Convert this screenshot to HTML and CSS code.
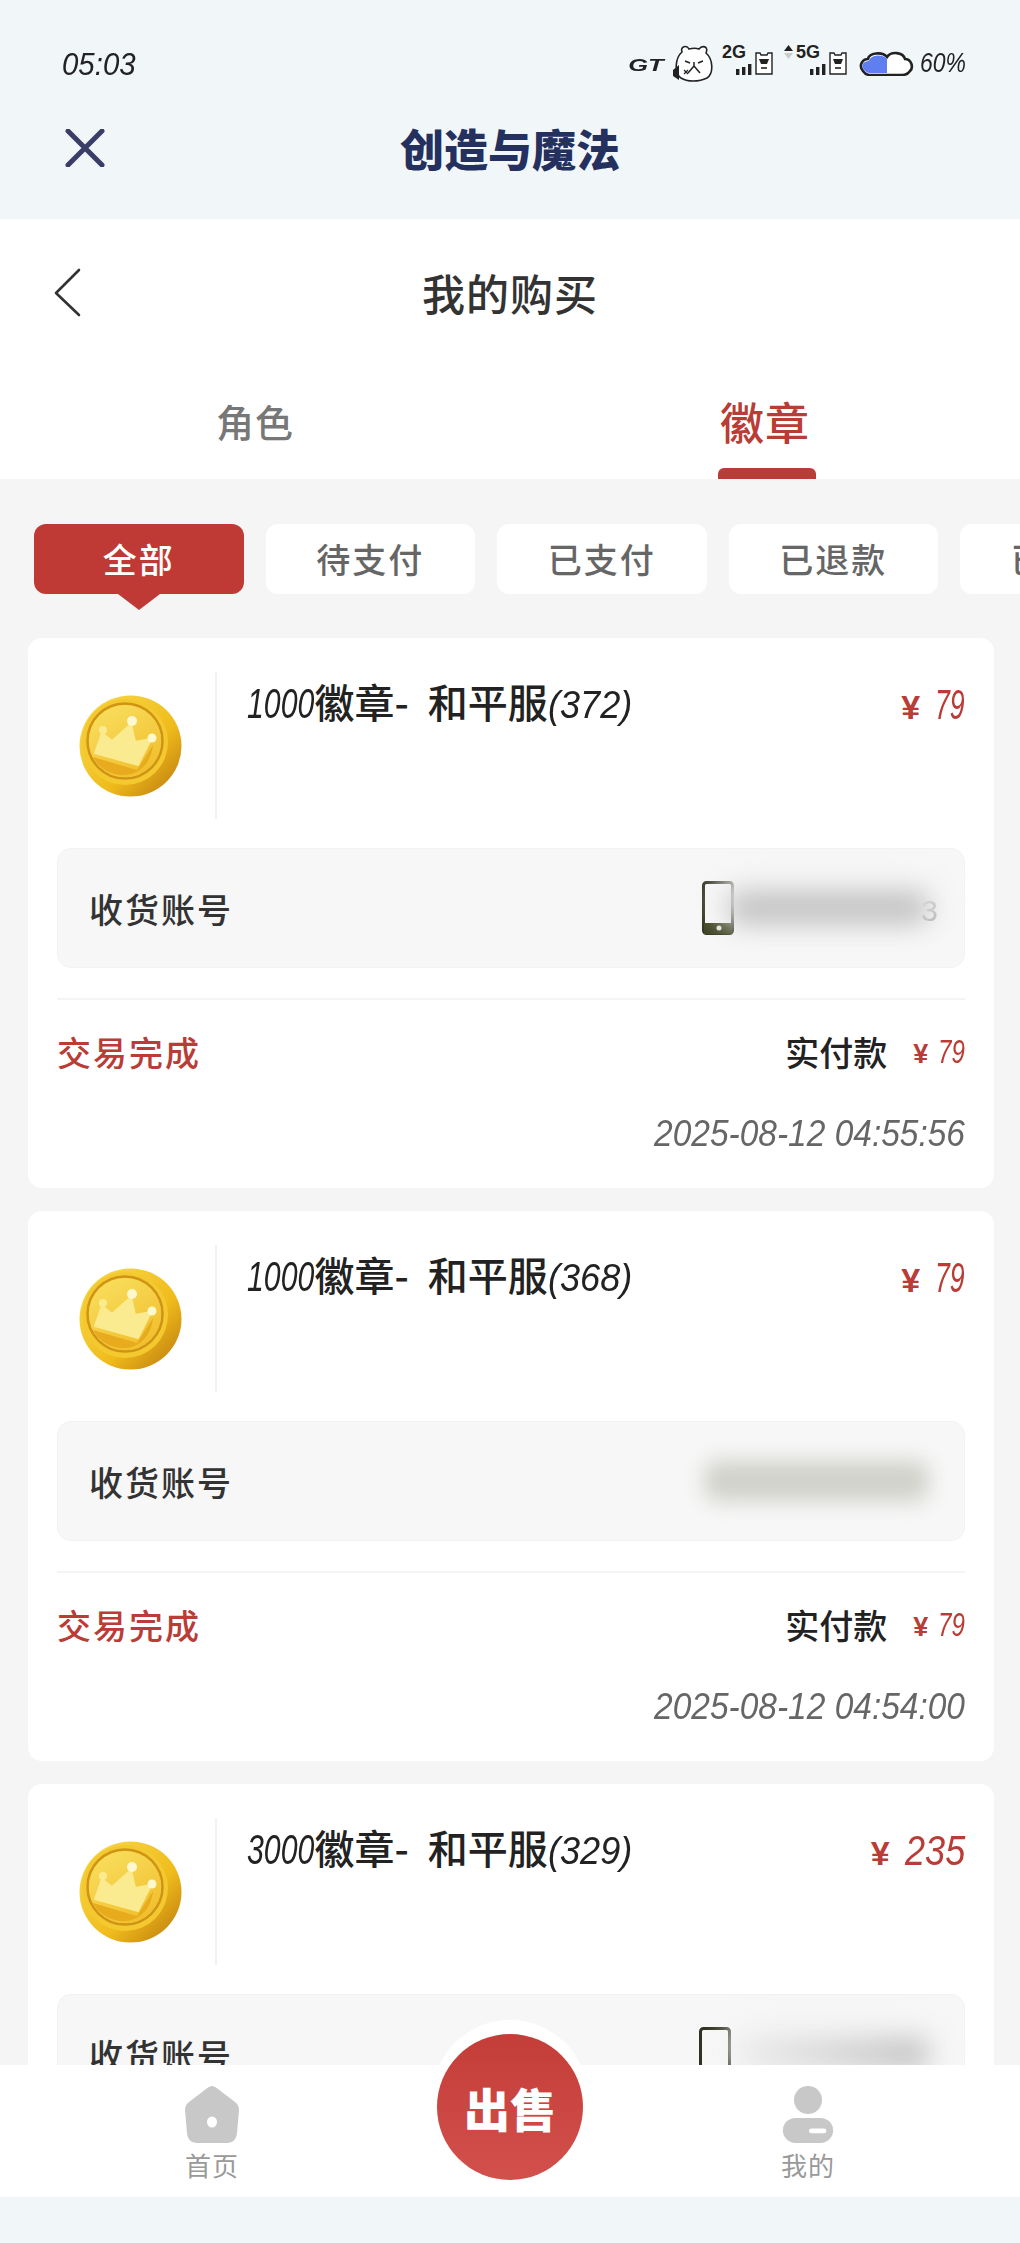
FILE: index.html
```html
<!DOCTYPE html>
<html lang="zh-CN">
<head>
    <meta charset="UTF-8">
    <meta name="viewport" content="width=device-width, initial-scale=1.0">
    <title>我的购买</title>
    <link rel="stylesheet" href="styles.css">
</head>
<body>

    <!-- Shared shapes -->
    <svg class="defs" width="0" height="0" aria-hidden="true">
        <defs>
            <linearGradient id="coinEdge" x1="0" y1="0" x2="1" y2="1">
                <stop offset="0" stop-color="#f8dc4e"/>
                <stop offset="0.6" stop-color="#f0bc1c"/>
                <stop offset="1" stop-color="#b9760c"/>
            </linearGradient>
            <linearGradient id="coinFace" x1="0.2" y1="0" x2="0.8" y2="1">
                <stop offset="0" stop-color="#f9de5e"/>
                <stop offset="1" stop-color="#f0bd2a"/>
            </linearGradient>
            <symbol id="coin" viewBox="0 0 103 102">
                <ellipse cx="51.5" cy="51" rx="51" ry="50.5" fill="url(#coinEdge)"/>
                <ellipse cx="46" cy="47" rx="43" ry="43" fill="#f3c92f"/>
                <circle cx="46" cy="46" r="37.5" fill="none" stroke="#cf9416" stroke-width="2.5"/>
                <circle cx="46" cy="46" r="36" fill="url(#coinFace)"/>
                <path d="M14 62 L58 75 L74 50 C72 70 58 82 40 80 C28 78 19 72 14 62Z" fill="#e9ab1e"/>
                <path d="M16 58 L23 38 L33 46 L52 29 L56 47 L72 44 L59 70Z" fill="#fbeb90" stroke="#fbeb90" stroke-width="2" stroke-linejoin="round"/>
                <circle cx="24" cy="35" r="4" fill="#fbeb90"/>
                <circle cx="53" cy="26" r="5" fill="#fff8cf"/>
                <circle cx="73" cy="43" r="4.5" fill="#fff8cf"/>
            </symbol>
            <symbol id="phone" viewBox="0 0 32 54">
                <rect x="1.5" y="1.5" width="29" height="51" rx="3" fill="#f7f7f7" stroke="#2f3320" stroke-width="3"/>
                <rect x="2" y="42" width="28" height="11" fill="#3d4220"/>
                <circle cx="17" cy="47" r="2.5" fill="#e6e6d8"/>
            </symbol>
            <symbol id="hamster" viewBox="0 0 20 24">
                <path d="M2 2 H6 L7 4 H13 L14 2 H18 V23 H2Z" fill="#fff" stroke="#222" stroke-width="1.4"/>
                <path d="M5 8 H15 L13 13 H7Z" fill="#222"/>
                <path d="M7 17 H13" stroke="#222" stroke-width="1.6"/>
            </symbol>
            <symbol id="bars" viewBox="0 0 17 11">
                <rect x="0" y="5" width="3.4" height="6" fill="#222"/>
                <rect x="6" y="3" width="3.4" height="8" fill="#222"/>
                <rect x="12" y="0" width="3.4" height="11" fill="#222"/>
            </symbol>
        </defs>
    </svg>

    <div class="page">

        <!-- Host app bar -->
        <header class="host-bar">
            <div class="status-bar">
                <span class="time">05:03</span>
                <div class="status-icons">
                    <span class="gt">GT</span>
                    <svg class="bear" viewBox="0 0 41 37" aria-hidden="true">
                        <path d="M9 7 C7 1 14 0 16 4 C20 3 23 3 26 4 C29 0 36 1 33 8 C40 14 41 28 34 33 C26 37 14 37 8 33 C1 28 2 13 9 7Z" fill="#fff" stroke="#222" stroke-width="1.6"/>
                        <path d="M12 16 L17 18 M30 16 L25 18 M21 17 L21 21 M21 21 L15 28 M21 21 L27 28" stroke="#222" stroke-width="1.5" fill="none"/>
                        <path d="M11 25 L15 29 M15 25 L11 29" stroke="#222" stroke-width="1.2"/>
                        <path d="M0 25 L6 20 V35 L0 31Z" fill="#222"/>
                    </svg>
                    <div class="signal">
                        <span class="net">2G</span>
                        <div class="signal-row">
                            <svg class="bars"><use href="#bars"/></svg>
                            <svg class="hamster"><use href="#hamster"/></svg>
                        </div>
                    </div>
                    <div class="signal signal-five">
                        <div class="net-row">
                            <svg class="arrows" viewBox="0 0 9 14" aria-hidden="true">
                                <path d="M4.5 0 L9 6 H0Z" fill="#222"/>
                                <path d="M4.5 14 L9 8 H0Z" fill="#ccc"/>
                            </svg>
                            <span class="net">5G</span>
                        </div>
                        <div class="signal-row">
                            <svg class="bars"><use href="#bars"/></svg>
                            <svg class="hamster"><use href="#hamster"/></svg>
                        </div>
                    </div>
                    <svg class="battery" viewBox="0 0 59 25" aria-hidden="true">
                        <path d="M5 20 C0 14 5 8 10 8 C11 2 24 0 29 6 C33 0 45 1 47 8 C53 8 56 16 52 20 C50 23 47 24 44 24 H12 C9 24 7 23 5 20Z" fill="#fff" stroke="#222" stroke-width="2.6"/>
                        <path d="M6 19 C2 14 6 10 11 10 C12 4 24 2 29 8 V22 H12 C9 22 8 21 6 19Z" fill="#5f7ff0"/>
                    </svg>
                    <span class="percent">60%</span>
                </div>
            </div>
            <div class="host-title-row">
                <svg class="close-icon" viewBox="0 0 40 38" aria-label="关闭">
                    <path d="M3 2 L37 36 M37 2 L3 36" stroke="#3a3d66" stroke-width="5" stroke-linecap="round"/>
                </svg>
                <h1 class="host-title">创造与魔法</h1>
            </div>
        </header>

        <main class="content">

            <section class="head-panel">
                <div class="page-head">
                    <svg class="back-icon" viewBox="0 0 27 49" aria-label="返回">
                        <path d="M25 2 L2 25 L25 47" fill="none" stroke="#333" stroke-width="2.6" stroke-linecap="round" stroke-linejoin="round"/>
                    </svg>
                    <h2 class="page-title">我的购买</h2>
                </div>
                <div class="tabs">
                    <div class="tab">角色</div>
                    <div class="tab tab-active">徽章</div>
                </div>
            </section>

            <div class="filters">
                <div class="chip chip-active">全部</div>
                <div class="chip">待支付</div>
                <div class="chip">已支付</div>
                <div class="chip">已退款</div>
                <div class="chip">已取消</div>
            </div>

            <!-- Order 1 -->
            <article class="order">
                <div class="product">
                    <div class="product-pic"><svg class="coin"><use href="#coin"/></svg></div>
                    <div class="product-name"><i class="qty">1000</i>徽章- 和平服<i class="stock">(372)</i></div>
                    <div class="price"><span class="yen">¥</span><i class="amount-2">79</i></div>
                </div>
                <div class="account">
                    <span class="account-label">收货账号</span>
                    <div class="account-value">
                        <svg class="phone"><use href="#phone"/></svg>
                        <div class="mask"></div>
                        <span class="number-tail">3</span>
                    </div>
                </div>
                <div class="order-foot">
                    <div class="foot-row">
                        <span class="state">交易完成</span>
                        <span class="paid">实付款<span class="paid-price"><span class="yen">¥</span><i>79</i></span></span>
                    </div>
                    <div class="order-date">2025-08-12 04:55:56</div>
                </div>
            </article>

            <!-- Order 2 -->
            <article class="order">
                <div class="product">
                    <div class="product-pic"><svg class="coin"><use href="#coin"/></svg></div>
                    <div class="product-name"><i class="qty">1000</i>徽章- 和平服<i class="stock">(368)</i></div>
                    <div class="price"><span class="yen">¥</span><i class="amount-2">79</i></div>
                </div>
                <div class="account">
                    <span class="account-label">收货账号</span>
                    <div class="account-value">
                        <div class="mask mask-wide"></div>
                    </div>
                </div>
                <div class="order-foot">
                    <div class="foot-row">
                        <span class="state">交易完成</span>
                        <span class="paid">实付款<span class="paid-price"><span class="yen">¥</span><i>79</i></span></span>
                    </div>
                    <div class="order-date">2025-08-12 04:54:00</div>
                </div>
            </article>

            <!-- Order 3 -->
            <article class="order">
                <div class="product">
                    <div class="product-pic"><svg class="coin"><use href="#coin"/></svg></div>
                    <div class="product-name"><i class="qty">3000</i>徽章- 和平服<i class="stock">(329)</i></div>
                    <div class="price"><span class="yen">¥</span><i class="amount-3">235</i></div>
                </div>
                <div class="account">
                    <span class="account-label">收货账号</span>
                    <div class="account-value">
                        <svg class="phone"><use href="#phone"/></svg>
                        <div class="mask mask-soft"></div>
                    </div>
                </div>
            </article>

        </main>

        <!-- Bottom navigation -->
        <nav class="bottom-nav">
            <div class="nav-item">
                <svg class="nav-icon" viewBox="0 0 54 57" aria-hidden="true">
                    <path d="M23 1.5 C25.5 -0.5 28.5 -0.5 31 1.5 L50 16 C53 18 54 21 54 24 L52 47 C51.5 53 48 57 42 57 H12 C6 57 2.5 53 2 47 L0 24 C0 21 1 18 4 16Z" fill="#c8c8c8"/>
                    <ellipse cx="27" cy="36" rx="5" ry="5.5" fill="#fff"/>
                </svg>
                <span class="nav-label">首页</span>
            </div>
            <div class="sell-slot">
                <div class="sell-halo">
                    <div class="sell-btn">出售</div>
                </div>
            </div>
            <div class="nav-item">
                <svg class="nav-icon" viewBox="0 0 52 59" aria-hidden="true">
                    <circle cx="26" cy="14.5" r="14.5" fill="#c8c8c8"/>
                    <rect x="0" y="33" width="52" height="26" rx="13" fill="#c8c8c8"/>
                    <rect x="27" y="44" width="18" height="5" rx="2.5" fill="#fff"/>
                </svg>
                <span class="nav-label">我的</span>
            </div>
        </nav>

        <div class="bottom-strip"></div>
    </div>

</body>
</html>
```

FILE: styles.css
```css
/* Reset */
* {
    box-sizing: border-box;
    margin: 0;
    padding: 0;
}

html, body {
    width: 100%;
    height: 100%;
    overflow: hidden;
    background-color: #f1f6f9;
    font-family: "Noto Sans CJK SC", "Noto Sans", sans-serif;
}

.defs {
    position: absolute;
}

/* Digits in the reference use a thin, tall, slanted hand font,
   so squeeze Liberation Sans italic and pull the next box back in */
i {
    display: inline-block;
    font-family: "Liberation Sans", sans-serif;
    font-style: italic;
    font-weight: 400;
    transform-origin: left center;
}

.page {
    width: 1020px;
    height: 2243px;
    display: flex;
    flex-direction: column;
    overflow: hidden;
}

/* Host app bar */
.host-bar {
    height: 219px;
    flex: none;
    padding-top: 43px;
    background-color: #f1f6f9;
}

.status-bar {
    height: 40px;
    display: flex;
    justify-content: space-between;
    align-items: center;
    padding: 0 52px 0 62px;
}

.time {
    font-family: "Liberation Sans", sans-serif;
    font-style: italic;
    font-size: 32px;
    color: #222;
    padding-top: 2px;
    transform: scaleX(0.92);
    transform-origin: left center;
}

.status-icons {
    display: flex;
    align-items: center;
}

.gt {
    font-family: "Liberation Sans", sans-serif;
    font-weight: 700;
    font-style: italic;
    font-size: 17px;
    transform: scaleX(1.5);
    width: 40px;
    text-align: center;
    color: #222;
    margin-top: 5px;
}

.bear {
    width: 41px;
    height: 37px;
    margin-left: 7px;
}

.signal {
    width: 52px;
    margin-left: 8px;
    display: flex;
    flex-direction: column;
    height: 36px;
}

.signal-five {
    width: 64px;
    margin-left: 10px;
}

.net-row {
    display: flex;
    align-items: flex-start;
    gap: 3px;
    height: 15px;
}

.arrows {
    width: 9px;
    height: 14px;
}

.net {
    font-family: "Liberation Sans", sans-serif;
    font-weight: 700;
    font-size: 18px;
    line-height: 15px;
    height: 15px;
    color: #222;
}

.signal-row {
    display: flex;
    align-items: flex-end;
    justify-content: flex-end;
    margin-top: -9px;
}

.bars {
    width: 17px;
    height: 11px;
}

.hamster {
    width: 20px;
    height: 24px;
    margin-left: 1px;
}

.battery {
    width: 59px;
    height: 25px;
    margin-left: 10px;
}

.percent {
    font-family: "Liberation Sans", sans-serif;
    font-style: italic;
    font-size: 28px;
    color: #222;
    margin-left: 3px;
    margin-right: -8px;
    transform: scaleX(0.82);
    transform-origin: left center;
}

.host-title-row {
    display: grid;
    grid-template-columns: 1fr auto 1fr;
    align-items: center;
    height: 80px;
    margin-top: 25px;
    padding-left: 65px;
    padding-right: 65px;
}

.close-icon {
    width: 40px;
    height: 38px;
}

.host-title {
    font-size: 44px;
    line-height: 80px;
    font-weight: 900;
    color: #24305e;
}

/* Scrolling part of the page */
.content {
    flex: 1;
    min-height: 0;
    overflow: hidden;
    background-color: #f5f5f5;
}

.head-panel {
    background-color: #fff;
}

.page-head {
    height: 146px;
    display: grid;
    grid-template-columns: 1fr auto 1fr;
    align-items: center;
    padding-left: 54px;
    padding-right: 54px;
}

.back-icon {
    width: 27px;
    height: 49px;
}

.page-title {
    font-size: 43px;
    line-height: 60px;
    font-weight: 500;
    letter-spacing: 1px;
    color: #333;
}

.tabs {
    display: flex;
}

.tab {
    flex: 1;
    display: flex;
    flex-direction: column;
    align-items: center;
    padding-top: 29px;
    font-size: 38px;
    line-height: 54px;
    font-weight: 500;
    letter-spacing: 1px;
    color: #777;
}

.tab::after {
    content: "";
    display: block;
    width: 98px;
    height: 11px;
    margin-top: 20px;
    border-radius: 6px 6px 0 0;
}

.tab-active {
    font-size: 44px;
    color: #b93c36;
}

.tab-active::after {
    margin-left: 4px;
    background-color: #b93c36;
}

/* Filter chips */
.filters {
    display: flex;
    gap: 22px;
    padding: 45px 0 44px 34px;
    overflow: hidden;
}

.chip {
    position: relative;
    flex: none;
    width: 209.5px;
    height: 70px;
    background-color: #fff;
    border-radius: 12px;
    font-size: 34px;
    line-height: 70px;
    font-weight: 500;
    text-align: center;
    letter-spacing: 2px;
    color: #666;
}

.chip-active {
    background-color: #c03a35;
    color: #fff;
}

.chip-active::after {
    content: "";
    position: absolute;
    left: 50%;
    bottom: -16px;
    margin-left: -21px;
    border-top: 16px solid #c03a35;
    border-left: 21px solid transparent;
    border-right: 21px solid transparent;
}

/* Order cards */
.order {
    margin: 0 26px 23px 28px;
    padding: 34px 29px 0;
    height: 550px;
    background-color: #fff;
    border-radius: 14px;
}

.product {
    display: flex;
    height: 147px;
}

.product-pic {
    flex: none;
    width: 160px;
    display: flex;
    align-items: center;
    padding-left: 22px;
    border-right: 2px solid #f2f2f2;
}

.coin {
    width: 103px;
    height: 102px;
}

.product-name {
    flex: 1;
    padding-left: 30px;
    font-size: 40px;
    line-height: 58px;
    word-spacing: 10px;
    font-weight: 500;
    color: #222;
    white-space: nowrap;
}

.qty {
    font-size: 42px;
    transform: scaleX(0.72);
    margin-right: -0.62em;
}

.stock {
    font-size: 38px;
    transform: scaleX(0.95);
    margin-right: -0.1em;
}

.price {
    font-size: 34px;
    line-height: 64px;
    color: #b93c36;
}

.amount-2 {
    font-size: 43px;
    transform: scaleX(0.62);
    margin-right: -0.42em;
}

.amount-3 {
    font-size: 43px;
    transform: scaleX(0.84);
    margin-right: -0.267em;
}

.yen {
    font-family: "Liberation Sans", sans-serif;
    font-weight: 700;
    margin-right: 15px;
}

.account {
    display: flex;
    justify-content: space-between;
    align-items: center;
    height: 120px;
    margin-top: 29px;
    padding: 0 35px 0 31px;
    background-color: #f7f7f7;
    border: 1px solid #f2f2f2;
    border-radius: 14px;
}

.account-label {
    font-size: 34px;
    letter-spacing: 2px;
    font-weight: 500;
    color: #333;
}

.account-value {
    display: flex;
    align-items: center;
    height: 54px;
}

.phone {
    width: 32px;
    height: 54px;
}

/* Privacy smear over the account number */
.mask {
    width: 201px;
    height: 34px;
    margin-left: -6px;
    border-radius: 14px;
    background-color: #c4c4c4;
    box-shadow: 0 -8px 0 12px #f4f4f4;
    filter: blur(13px);
}

.mask-wide {
    width: 225px;
    height: 42px;
    margin-left: 0;
    background-color: #d2d2cc;
    box-shadow: none;
    filter: blur(10px);
}

.mask-soft {
    width: 190px;
    margin-left: 8px;
    background: linear-gradient(to right, #ececec, #c4c4c4);
}

.number-tail {
    width: 16px;
    margin-right: -8px;
    margin-left: -8px;
    padding-top: 6px;
    font-family: "Liberation Sans", sans-serif;
    font-size: 30px;
    color: #a8a8a8;
}

.order-foot {
    margin-top: 30px;
    border-top: 2px solid #f4f4f4;
}

.foot-row {
    display: flex;
    justify-content: space-between;
    align-items: center;
    height: 60px;
    margin-top: 21px;
}

.state {
    font-size: 34px;
    letter-spacing: 2px;
    font-weight: 500;
    color: #b93c36;
}

.paid {
    display: flex;
    align-items: center;
    font-size: 34px;
    font-weight: 500;
    color: #222;
}

.paid-price {
    margin-left: 26px;
    font-size: 27px;
    font-weight: 400;
    color: #b93c36;
}

.paid-price i {
    font-size: 33px;
    transform: scaleX(0.73);
    margin-right: -0.3em;
}

.paid-price .yen {
    margin-right: 10px;
}

.order-date {
    margin-top: 33px;
    text-align: right;
    font-family: "Liberation Sans", sans-serif;
    font-style: italic;
    font-size: 36px;
    line-height: 40px;
    color: #666;
    transform: scaleX(0.93);
    transform-origin: right center;
}

/* Bottom navigation */
.bottom-nav {
    position: relative;
    flex: none;
    height: 132px;
    display: grid;
    grid-template-columns: 424px 172px 424px;
    background-color: #fff;
}

.nav-item {
    display: flex;
    flex-direction: column;
    align-items: center;
    padding-top: 21px;
}

.nav-icon {
    width: 54px;
    height: 57px;
}

.nav-label {
    margin-top: 7px;
    font-size: 26px;
    line-height: 30px;
    letter-spacing: 1px;
    color: #999;
}

.sell-slot {
    position: relative;
}

.sell-halo {
    position: absolute;
    left: 8px;
    top: -45px;
    width: 156px;
    height: 156px;
    padding: 14px 5px 0;
    border-radius: 50%;
    background-color: #fff;
}

.sell-btn {
    width: 146px;
    height: 146px;
    border-radius: 50%;
    background: linear-gradient(180deg, #c43d38, #d2504c);
    color: #fff;
    font-size: 46px;
    line-height: 146px;
    font-weight: 900;
    text-align: center;
}

.bottom-strip {
    flex: none;
    height: 46px;
    background-color: #f1f6f9;
}
```
